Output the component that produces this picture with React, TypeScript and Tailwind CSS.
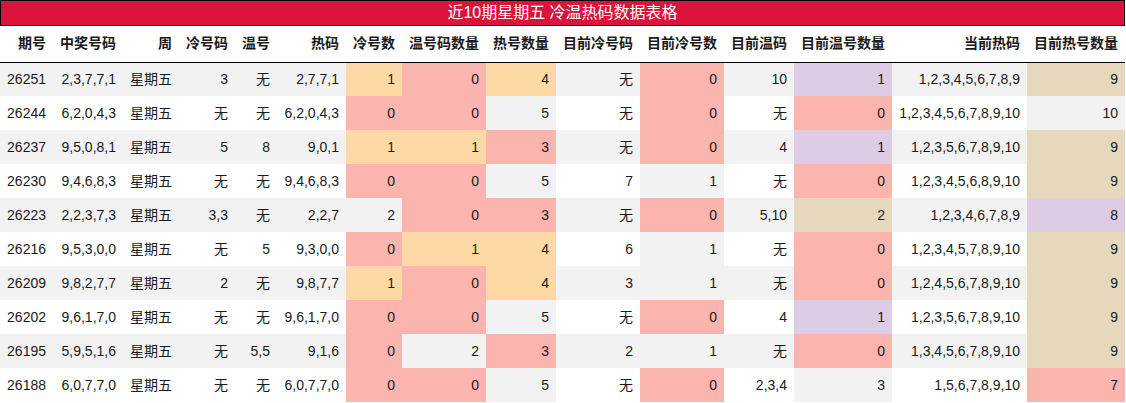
import React from 'react';

const PINK = 'bg-[#fbb4ae]';
const ORANGE = 'bg-[#fed9a6]';
const GRAY = 'bg-[#f2f2f2]';
const PURPLE = 'bg-[#decbe4]';
const TAN = 'bg-[#e5d8bd]';

const cols = [
  { title: '期号', w: 'w-[53px]' },
  { title: '中奖号码', w: 'w-[70px]' },
  { title: '周', w: 'w-[56px]' },
  { title: '冷号码', w: 'w-[56px]' },
  { title: '温号', w: 'w-[42px]' },
  { title: '热码', w: 'w-[69px]' },
  { title: '冷号数', w: 'w-[56px]' },
  { title: '温号码数量', w: 'w-[84px]' },
  { title: '热号数量', w: 'w-[70px]' },
  { title: '目前冷号码', w: 'w-[84px]' },
  { title: '目前冷号数', w: 'w-[84px]' },
  { title: '目前温码', w: 'w-[70px]' },
  { title: '目前温号数量', w: 'w-[98px]' },
  { title: '当前热码', w: 'w-[135px]' },
  { title: '目前热号数量', w: 'w-[98px]' },
];

const coldCount: Record<string, string> = { '0': PINK, '1': ORANGE, '2': GRAY };
const hotCount: Record<string, string> = { '3': PINK, '4': ORANGE, '5': GRAY };
const curCold: Record<string, string> = { '0': PINK, '1': GRAY };
const curWarm: Record<string, string> = { '0': PINK, '1': PURPLE, '2': TAN, '3': GRAY };
const curHot: Record<string, string> = { '7': PINK, '8': PURPLE, '9': TAN, '10': GRAY };

// column index -> colour map
const colour: Record<number, Record<string, string>> = {
  6: coldCount,
  7: coldCount,
  8: hotCount,
  10: curCold,
  12: curWarm,
  14: curHot,
};

const rows: string[][] = [
  ['26251', '2,3,7,7,1', '星期五', '3', '无', '2,7,7,1', '1', '0', '4', '无', '0', '10', '1', '1,2,3,4,5,6,7,8,9', '9'],
  ['26244', '6,2,0,4,3', '星期五', '无', '无', '6,2,0,4,3', '0', '0', '5', '无', '0', '无', '0', '1,2,3,4,5,6,7,8,9,10', '10'],
  ['26237', '9,5,0,8,1', '星期五', '5', '8', '9,0,1', '1', '1', '3', '无', '0', '4', '1', '1,2,3,5,6,7,8,9,10', '9'],
  ['26230', '9,4,6,8,3', '星期五', '无', '无', '9,4,6,8,3', '0', '0', '5', '7', '1', '无', '0', '1,2,3,4,5,6,8,9,10', '9'],
  ['26223', '2,2,3,7,3', '星期五', '3,3', '无', '2,2,7', '2', '0', '3', '无', '0', '5,10', '2', '1,2,3,4,6,7,8,9', '8'],
  ['26216', '9,5,3,0,0', '星期五', '无', '5', '9,3,0,0', '0', '1', '4', '6', '1', '无', '0', '1,2,3,4,5,7,8,9,10', '9'],
  ['26209', '9,8,2,7,7', '星期五', '2', '无', '9,8,7,7', '1', '0', '4', '3', '1', '无', '0', '1,2,4,5,6,7,8,9,10', '9'],
  ['26202', '9,6,1,7,0', '星期五', '无', '无', '9,6,1,7,0', '0', '0', '5', '无', '0', '4', '1', '1,2,3,5,6,7,8,9,10', '9'],
  ['26195', '5,9,5,1,6', '星期五', '无', '5,5', '9,1,6', '0', '2', '3', '2', '1', '无', '0', '1,3,4,5,6,7,8,9,10', '9'],
  ['26188', '6,0,7,7,0', '星期五', '无', '无', '6,0,7,7,0', '0', '0', '5', '无', '0', '2,3,4', '3', '1,5,6,7,8,9,10', '7'],
];

const App: React.FC = () => {
  return (
    <div className="w-[1126px] bg-white font-['Liberation_Sans','Noto_Sans_CJK_SC',sans-serif] text-[14px] text-[#1a1a1a]">
      <div className="w-[1125px] h-[26px] bg-[#dc143c] border border-black flex items-center justify-center text-white text-[16px] leading-none">
        近10期星期五 冷温热码数据表格
      </div>
      <table className="table-fixed border-collapse w-[1125px]">
        <colgroup>
          {cols.map((c) => (
            <col key={c.title} className={c.w} />
          ))}
        </colgroup>
        <thead>
          <tr className="h-[36px] border-b border-black">
            {cols.map((c) => (
              <th key={c.title} className="px-[7px] text-right font-bold whitespace-nowrap">
                {c.title}
              </th>
            ))}
          </tr>
        </thead>
        <tbody>
          {rows.map((r, i) => (
            <tr key={r[0]} className={`h-[34px] ${i % 2 === 0 ? 'bg-[#f2f2f2]' : 'bg-white'}`}>
              {r.map((v, j) => (
                <td key={j} className={`px-[7px] text-right whitespace-nowrap ${colour[j] ? colour[j][v] || '' : ''}`}>
                  {v}
                </td>
              ))}
            </tr>
          ))}
        </tbody>
      </table>
    </div>
  );
};

export default App;
